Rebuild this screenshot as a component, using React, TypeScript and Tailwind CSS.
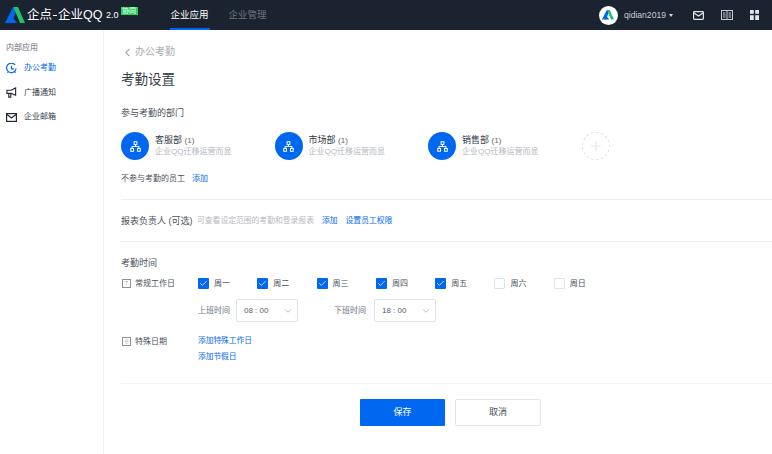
import React from "react";
import { ChevronLeft, ChevronDown, Check, Plus } from "lucide-react";

function Logo({ size = 20 }: { size?: number }) {
  return (
    <svg width={size} height={size * 0.8} viewBox="0 0 20 16">
      <path d="M8 0h4.5L7 16H0z" fill="#0068f0" />
      <path d="M8.5 0H13l7 16h-5z" fill="#1fc46a" />
      <path d="M5 16l3-5 4 5z" fill="#0068f0" />
    </svg>
  );
}

function Org() {
  return (
    <svg width="11" height="11" viewBox="0 0 12 12" fill="none" stroke="#fff" strokeWidth="1.1">
      <rect x="4.5" y="0.8" width="3" height="3" />
      <rect x="0.8" y="8.2" width="3" height="3" />
      <rect x="8.2" y="8.2" width="3" height="3" />
      <path d="M6 3.8V6M2.3 8.2V6h7.4v2.2" />
    </svg>
  );
}

function Dept({ name }: { name: string }) {
  return (
    <div className="flex w-[153.5px] items-center">
      <div className="flex h-7 w-7 items-center justify-center rounded-full bg-[#0068f0]">
        <Org />
      </div>
      <div className="ml-1.5 leading-[11px]">
        <div className="text-[#333b47]">
          {name} <span className="text-[8px] text-[#666]">(1)</span>
        </div>
        <div className="text-[8px] text-[#b4b8bf]">企业QQ迁移运营而显</div>
      </div>
    </div>
  );
}

function Day({ label, on }: { label: string; on: boolean }) {
  return (
    <div className="flex w-[59.3px] items-center">
      <div
        className={
          on
            ? "flex h-[11px] w-[11px] items-center justify-center rounded-[1px] bg-[#0068f0]"
            : "h-[11px] w-[11px] rounded-[1px] border border-[#dfe2e8] bg-white"
        }
      >
        {on && <Check size={9} color="#fff" strokeWidth={2} />}
      </div>
      <span className="ml-[5px] text-[8px] text-[#4a515c]">{label}</span>
    </div>
  );
}

function TimeSelect({ value }: { value: string }) {
  return (
    <div className="flex h-[23px] w-[62px] items-center justify-between rounded-[2px] border border-[#e0e3e9] pl-[7px] pr-[4px] text-[8px] text-[#555c67]">
      <span>{value}</span>
      <ChevronDown size={10} color="#a9adb4" />
    </div>
  );
}

function SmallCal({ mark }: { mark: string }) {
  return (
    <div className="ml-px flex h-[9px] w-[9px] items-center justify-center border border-[#8c9098] text-[5px] leading-none text-[#8c9098]">
      {mark}
    </div>
  );
}

function SideItem({ icon, label, active }: { icon: React.ReactNode; label: string; active?: boolean }) {
  return (
    <div className={"flex h-[24.5px] items-center pl-[6px] text-[8px] " + (active ? "text-[#0068f0]" : "text-[#333b47]")}>
      <span className="flex w-[18px]">{icon}</span>
      <span>{label}</span>
    </div>
  );
}

export default function App() {
  return (
    <div className="flex h-[454px] w-[772px] flex-col overflow-hidden bg-white text-[9px] leading-none [font-family:'Liberation_Sans','Noto_Sans_CJK_SC',sans-serif]">
      <header className="flex h-[30px] shrink-0 items-center bg-[#1b2230] text-white">
        <div className="ml-[5px] flex w-[20px]"><Logo /></div>
        <span className="ml-[2px] flex w-[79px] items-center text-[12.5px]">
          企点<span className="mx-px h-px w-[4px] bg-white" />企业QQ
        </span>
        <span className="text-[9px]">2.0</span>
        <span className="mb-[9px] ml-[2px] flex h-[8px] w-[17px] items-center justify-center bg-[#1fd15a] text-[7px] text-white">协同</span>
        <nav className="ml-[32px] flex h-full text-[9.5px]">
          <div className="flex h-full w-[40px] items-center justify-center border-b-2 border-[#0068f0] pt-[2px]">企业应用</div>
          <div className="ml-[18px] flex h-full w-[40px] items-center justify-center text-[#6c7480]">企业管理</div>
        </nav>
        <div className="ml-auto flex items-center">
          <div className="flex h-[19px] w-[19px] items-center justify-center rounded-full bg-white"><Logo size={12} /></div>
          <span className="ml-[6px] text-[8.6px] text-[#c9ccd2]">qidian2019</span>
          <span className="ml-[3px] h-0 w-0 border-x-[2.5px] border-t-[3px] border-x-transparent border-t-[#d5d8dd]" />
          <svg className="ml-[20px]" width="11" height="9" viewBox="0 0 11 9" fill="none" stroke="#e2e4e8" strokeWidth="1.2">
            <rect x="0.6" y="0.6" width="9.8" height="7.8" rx="0.8" />
            <path d="M1 2l4.5 3L10 2" />
          </svg>
          <svg className="ml-[17px]" width="12" height="10" viewBox="0 0 12 10" fill="none" stroke="#c9ccd2" strokeWidth="1">
            <rect x="0.5" y="0.5" width="11" height="9" />
            <path d="M6 0.5v9M2 3h2.5M2 5h2.5M2 7h2.5M7.5 3H10M7.5 5H10M7.5 7H10" />
          </svg>
          <svg className="ml-[17px] mr-[13px]" width="9" height="10" viewBox="0 0 9 10" fill="#e2e4e8">
            <rect x="0" y="0" width="3.8" height="3.8" />
            <rect x="5.2" y="0" width="3.8" height="3.8" />
            <rect x="0" y="5.2" width="3.8" height="4.8" />
            <rect x="5.2" y="5.2" width="3.8" height="4.8" />
          </svg>
        </div>
      </header>
      <div className="flex min-h-0 flex-1">
        <aside className="w-[104px] shrink-0 border-r border-[#f1f2f4] pt-[14px]">
          <div className="pl-[6px] text-[8px] text-[#666c76]">内部应用</div>
          <div className="mt-[4px]">
            <SideItem
              active
              label="办公考勤"
              icon={
                <svg width="11" height="11" viewBox="0 0 12 12" fill="none" stroke="#0068f0" strokeWidth="1.3">
                  <path d="M10 2.2A5.2 5.2 0 1 0 11 6" />
                  <path d="M6 3v3.4h2.8M1.5 10.5l1-1M10.5 10.5l-1-1" />
                </svg>
              }
            />
            <SideItem
              label="广播通知"
              icon={
                <svg width="11" height="11" viewBox="0 0 12 12" fill="none" stroke="#222831" strokeWidth="1.2">
                  <path d="M1 3.5h4.5L10.5 1v8L5.5 7H1zM3 7v4h2.2V7" />
                </svg>
              }
            />
            <SideItem
              label="企业邮箱"
              icon={
                <svg width="11" height="9" viewBox="0 0 11 9" fill="none" stroke="#222831" strokeWidth="1.2">
                  <rect x="0.6" y="0.6" width="9.8" height="7.8" />
                  <path d="M1 1.5l4.5 3.5L10 1.5" />
                </svg>
              }
            />
          </div>
        </aside>
        <main className="min-w-0 flex-1 pl-[17px] pt-[17px] text-[#333b47]">
          <div className="flex h-[10px] items-center text-[10px] text-[#a6abb2]">
            <ChevronLeft size={13} className="mr-[1px]" />
            <span>办公考勤</span>
          </div>
          <h1 className="mt-[16px] h-[14px] text-[13.5px] font-normal leading-[14px] text-[#333b47]">考勤设置</h1>
          <div className="mt-[22px] h-[9px] text-[#4a515c]">参与考勤的部门</div>
          <div className="mt-[14px] flex h-[28px] items-center">
            <Dept name="客服部" />
            <Dept name="市场部" />
            <Dept name="销售部" />
            <div className="flex h-7 w-7 items-center justify-center rounded-full border border-dashed border-[#dfe2e8]">
              <Plus size={16} color="#d5d9e2" strokeWidth={1} />
            </div>
          </div>
          <div className="mt-[15px] flex h-[9px] text-[8px]">
            <span className="text-[#4a515c]">不参与考勤的员工</span>
            <span className="ml-[7px] text-[#0068f0]">添加</span>
          </div>
          <div className="mt-[15px] h-px bg-[#eeeff1]" />
          <div className="mt-[16px] flex h-[10px] items-center text-[7.8px]">
            <span className="w-[76px] text-[9px] text-[#4a515c]">报表负责人 (可选)</span>
            <span className="text-[#b4b8bf]">可查看设定范围的考勤和登录报表</span>
            <span className="ml-[8px] text-[#0068f0]">添加</span>
            <span className="ml-[8px] text-[#0068f0]">设置员工权限</span>
          </div>
          <div className="mt-[15px] h-px bg-[#eeeff1]" />
          <div className="mt-[17px] h-[9px] text-[#4a515c]">考勤时间</div>
          <div className="mt-[10px] flex h-[11px] items-center">
            <div className="flex w-[77px] items-center text-[8px] text-[#4a515c]">
              <SmallCal mark="7" />
              <span className="ml-[4px]">常规工作日</span>
            </div>
            <Day label="周一" on />
            <Day label="周二" on />
            <Day label="周三" on />
            <Day label="周四" on />
            <Day label="周五" on />
            <Day label="周六" on={false} />
            <Day label="周日" on={false} />
          </div>
          <div className="ml-[77px] mt-[10px] flex h-[23px] items-center text-[8px] text-[#6b7280]">
            <span className="w-[38px]">上班时间</span>
            <TimeSelect value="08 : 00" />
            <span className="ml-[36px] w-[40px]">下班时间</span>
            <TimeSelect value="18 : 00" />
          </div>
          <div className="mt-[15px] flex text-[8px]">
            <div className="flex h-[9px] w-[77px] items-center text-[#4a515c]">
              <SmallCal mark="※" />
              <span className="ml-[4px]">特殊日期</span>
            </div>
            <div className="text-[7.7px] text-[#0068f0]">
              <div className="h-[9px]">添加特殊工作日</div>
              <div className="mt-[7px] h-[9px]">添加节假日</div>
            </div>
          </div>
          <div className="mt-[21px] h-px bg-[#f1f2f4]" />
          <div className="ml-[239px] mt-[15px] flex">
            <button className="h-[27px] w-[85px] rounded-[1px] bg-[#0068f0] text-[9px] text-white">保存</button>
            <button className="ml-[10px] h-[27px] w-[86px] rounded-[2px] border border-[#e4e6ea] bg-white text-[9px] text-[#4a515c]">取消</button>
          </div>
        </main>
      </div>
    </div>
  );
}
